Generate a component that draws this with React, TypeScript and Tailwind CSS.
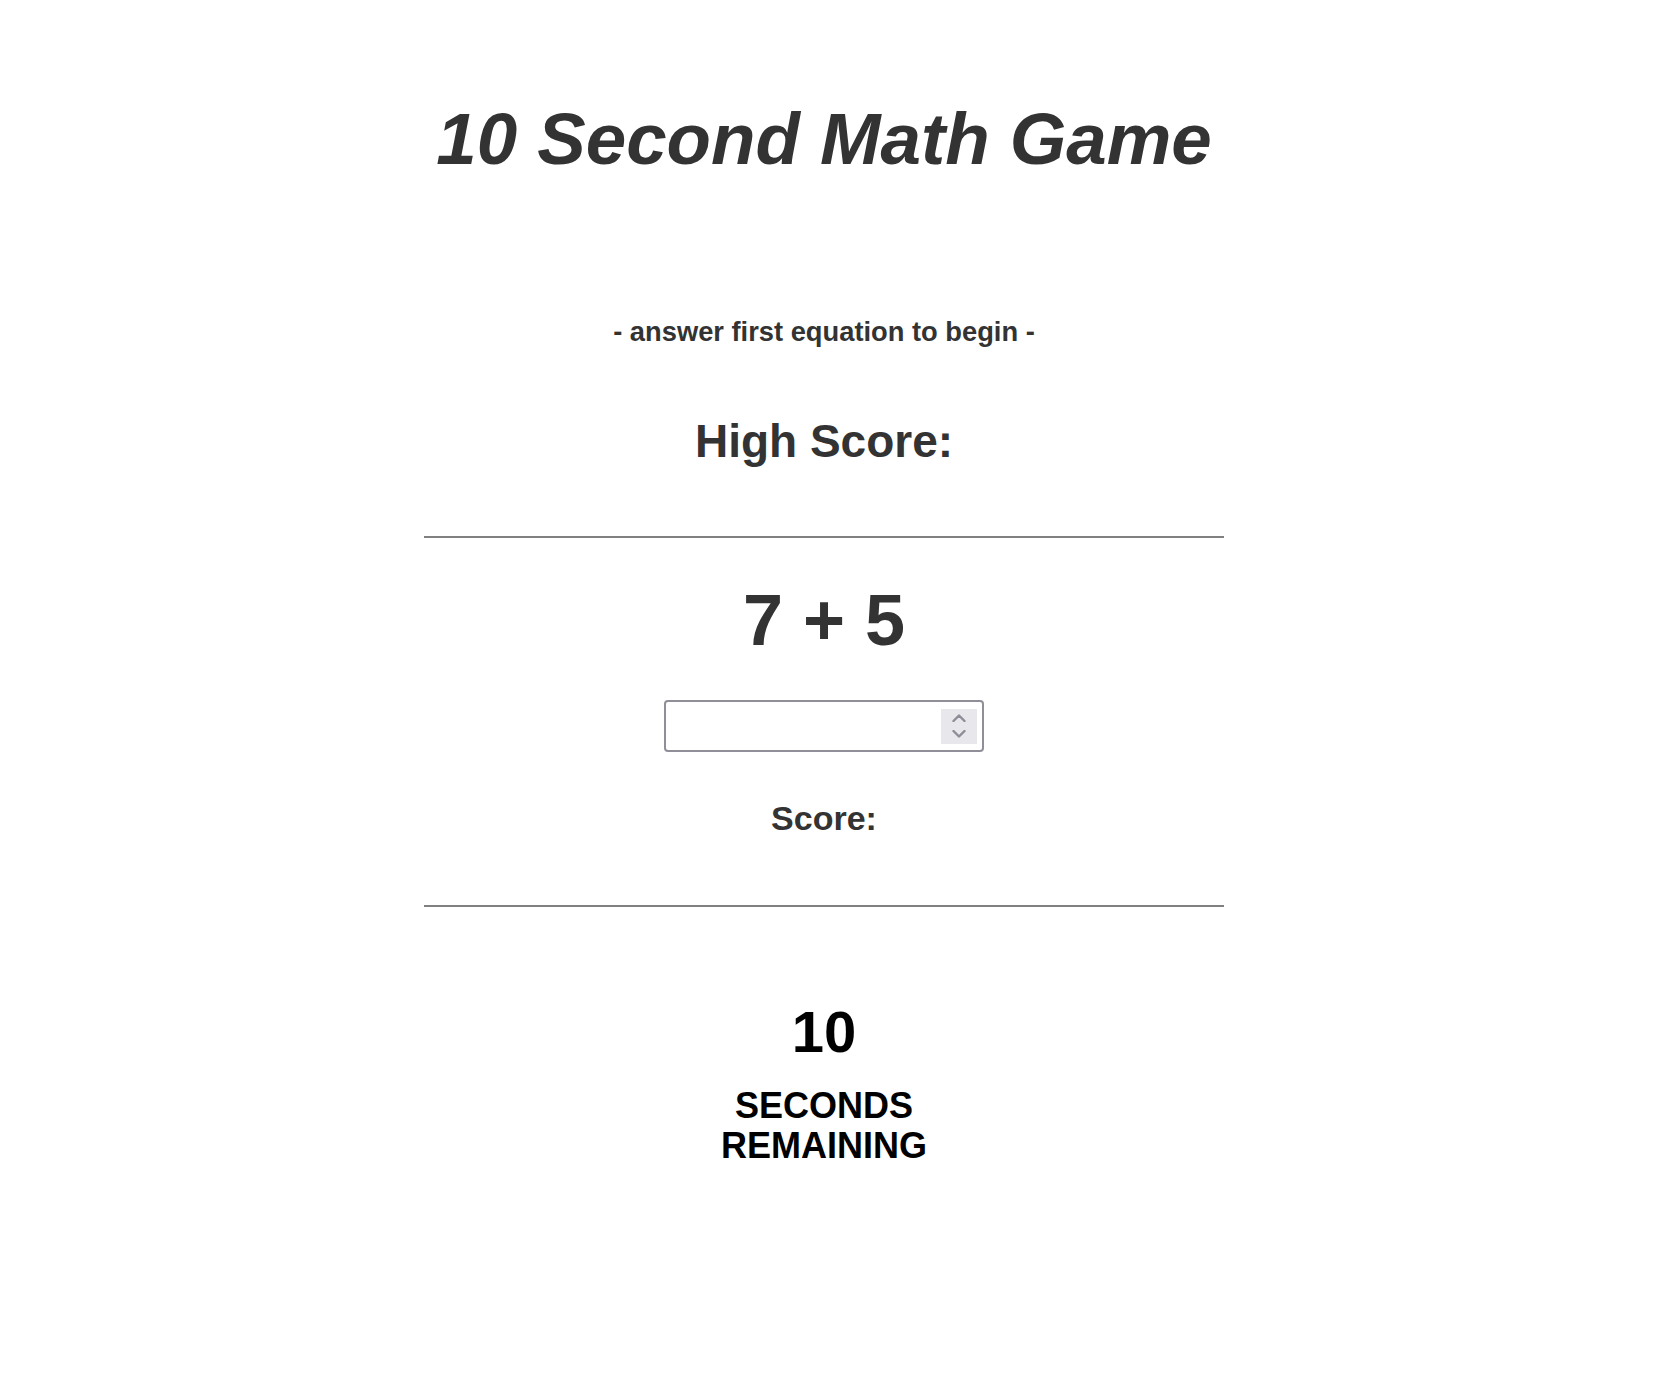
import { useState } from "react";

const Spinner = () => (
  <div className="flex h-[35px] w-[36px] flex-col items-center justify-center gap-[8px] bg-[#e8e7ec]">
    <svg width="14" height="8" viewBox="0 0 14 8" fill="none">
      <path d="M1.5 7L7 1.5L12.5 7" stroke="#8e8c96" strokeWidth="2.4" strokeLinecap="round" strokeLinejoin="round" />
    </svg>
    <svg width="14" height="8" viewBox="0 0 14 8" fill="none">
      <path d="M1.5 1L7 6.5L12.5 1" stroke="#8e8c96" strokeWidth="2.4" strokeLinecap="round" strokeLinejoin="round" />
    </svg>
  </div>
);

export default function App() {
  const [answer, setAnswer] = useState("");

  return (
    <div className="min-h-screen bg-white pr-[10px] font-['Liberation_Sans',Arial,sans-serif] text-[#333]">
      <div className="mx-auto flex w-[800px] flex-col items-center text-center">
        <h1 className="mt-[103px] text-[72.7px] font-bold italic leading-none">10 Second Math Game</h1>

        <p className="mt-[142px] text-[27.3px] font-bold leading-none">- answer first equation to begin -</p>

        <h2 className="mt-[73px] text-[46px] font-bold leading-none">High Score:</h2>

        <hr className="mt-[72px] w-full border-0 border-t-2 border-[#808080]" />

        <div className="mt-[46px] text-[72px] font-bold leading-none">7 + 5</div>

        <div className="mt-[44px] flex h-[52px] w-[320px] items-center rounded-[4px] border-2 border-[#8f8e99] bg-white pr-[5px]">
          <input
            type="text"
            inputMode="numeric"
            value={answer}
            onChange={(e) => setAnswer(e.target.value)}
            className="h-full min-w-0 flex-1 bg-transparent px-2 text-[24px] outline-none"
          />
          <Spinner />
        </div>

        <h3 className="mt-[49px] text-[34px] font-bold leading-none">Score:</h3>

        <hr className="mt-[70px] w-full border-0 border-t-2 border-[#808080]" />

        <div className="mt-[96px] text-[58px] font-bold leading-none text-black">10</div>

        <div className="mt-[25px] text-[36px] font-bold leading-[40px] text-black">
          SECONDS
          <br />
          REMAINING
        </div>
      </div>
    </div>
  );
}
